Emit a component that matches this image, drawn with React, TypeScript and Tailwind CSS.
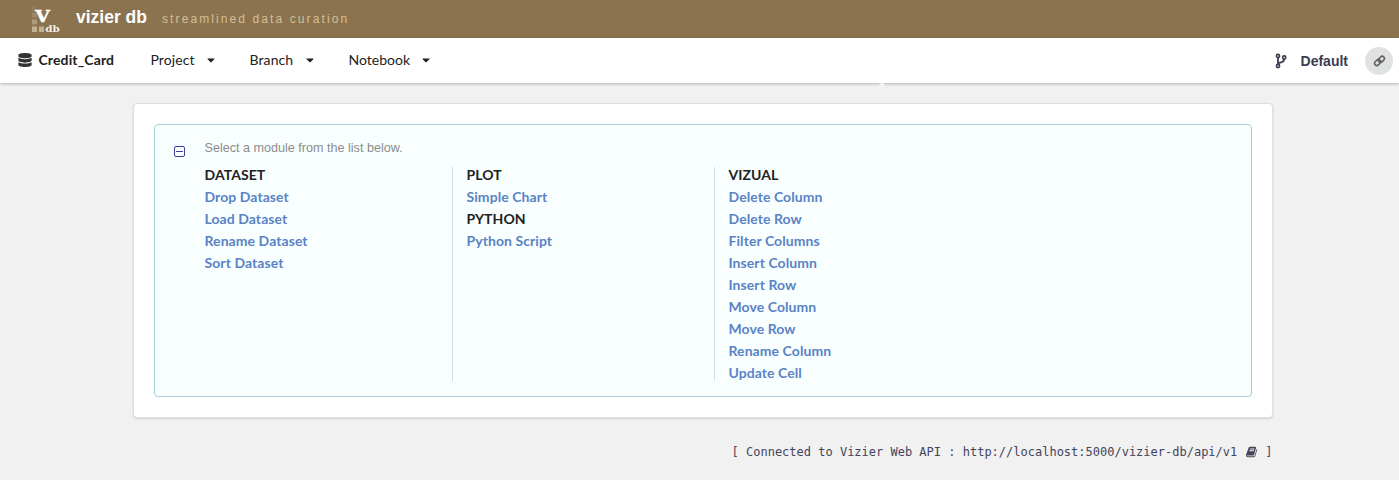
import type { ReactNode } from "react";
import { FaDatabase, FaCaretDown } from "react-icons/fa";

type Entry = { label: string; heading?: boolean };

const columns: Entry[][] = [
  [
    { label: "DATASET", heading: true },
    { label: "Drop Dataset" },
    { label: "Load Dataset" },
    { label: "Rename Dataset" },
    { label: "Sort Dataset" },
  ],
  [
    { label: "PLOT", heading: true },
    { label: "Simple Chart" },
    { label: "PYTHON", heading: true },
    { label: "Python Script" },
  ],
  [
    { label: "VIZUAL", heading: true },
    { label: "Delete Column" },
    { label: "Delete Row" },
    { label: "Filter Columns" },
    { label: "Insert Column" },
    { label: "Insert Row" },
    { label: "Move Column" },
    { label: "Move Row" },
    { label: "Rename Column" },
    { label: "Update Cell" },
  ],
];

function Logo() {
  return (
    <svg width="30" height="30" viewBox="0 0 30 30" className="mt-1 ml-[31px] shrink-0">
      <g fill="#e8d9bf">
        <rect x="1" y="2" width="5" height="5" opacity="0.08" />
        <rect x="1" y="8.500" width="5" height="5" opacity="0.2" />
        <rect x="1" y="15.500" width="5" height="5" opacity="0.4" />
        <rect x="1" y="22.500" width="5" height="5.500" opacity="0.6" />
        <rect x="8" y="22.500" width="5" height="5.500" opacity="0.6" />
      </g>
      <text x="4.300" y="18" fontFamily="'DejaVu Serif', serif" fontWeight="700" fontSize="17.500" textLength="14.500" lengthAdjust="spacingAndGlyphs" fill="#fff" stroke="#fff" strokeWidth="0.600">V</text>
      <text x="14.300" y="27.500" fontFamily="'DejaVu Serif', serif" fontWeight="700" fontSize="9.500" textLength="14.500" lengthAdjust="spacingAndGlyphs" fill="#f5eee2">db</text>
    </svg>
  );
}

function BranchIcon() {
  return (
    <svg width="12" height="16" viewBox="0 0 12 16" fill="none" stroke="currentColor" strokeWidth="1.600">
      <circle cx="3" cy="3" r="1.600" />
      <circle cx="3" cy="13" r="1.600" />
      <circle cx="9.200" cy="4.500" r="1.600" />
      <path d="M3 4.600v6.800M9.200 6.100c0 2.800-1.800 3-3.200 3.300-1.500.300-3 .600-3 2" strokeWidth="1.800" />
    </svg>
  );
}

function LinkIcon() {
  return (
    <svg width="13" height="13" viewBox="0 0 13 13" fill="none" stroke="currentColor" strokeWidth="1.600">
      <rect x="-3.300" y="-2.200" width="6.600" height="4.400" rx="2.200" transform="translate(8.400 5.300) rotate(-45)" />
      <rect x="-3.300" y="-2.200" width="6.600" height="4.400" rx="2.200" transform="translate(4.600 8.500) rotate(-45)" />
    </svg>
  );
}

function CollapseIcon() {
  return (
    <svg width="11" height="11" viewBox="0 0 11 11" fill="none" stroke="currentColor" className="mt-[21px] ml-[19px] shrink-0 text-[#453a9b]">
      <rect x="0.500" y="0.500" width="10" height="10" rx="1.500" />
      <path d="M2 5.500h7" />
    </svg>
  );
}

function BookIcon() {
  return (
    <svg width="12" height="12" viewBox="0 0 1792 1792" fill="currentColor" className="mr-[7px] ml-[9px] shrink-0">
      <path d="M1639 478q40 57 18 129l-275 906q-19 64-76.5 107.5t-122.5 43.5h-923q-77 0-148.5-53.5t-99.5-131.5q-24-67-2-127 0-4 3-27t4-37q1-8-3-21.5t-3-19.5q2-11 8-21t16.5-23.5 16.5-23.5q23-38 45-91.5t30-91.5q3-10 .5-30t-.5-28q3-11 17-28t17-23q21-36 42-92t25-90q1-9-2.5-32t.5-28q4-13 22-30.5t22-22.5q19-26 42.5-84.5t27.5-96.5q1-8-3-25.5t-2-26.5q2-8 9-18t18-23 17-21q8-12 16.5-30.5t15-35 16-36 19.5-32 26.5-23.5 36-11.5 47.5 5.5l-1 3q38-9 51-9h761q74 0 114 56t18 130l-274 906q-36 119-71.5 153.5t-128.5 34.5h-869q-27 0-38 15-11 16-1 43 24 70 144 70h923q29 0 56-15.5t35-41.5l300-987q7-22 5-57 38 15 59 43zm-1064 2q-4 13 2 22.5t20 9.5h608q13 0 25.5-9.5t16.5-22.5l21-64q4-13-2-22.5t-20-9.500h-608q-13 0-25.5 9.5t-16.5 22.5zm-83 256q-4 13 2 22.5t20 9.5h608q13 0 25.5-9.5t16.5-22.5l21-64q4-13-2-22.5t-20-9.500h-608q-13 0-25.5 9.5t-16.5 22.5z" />
    </svg>
  );
}

function MenuItem({ children, className }: { children: ReactNode; className: string }) {
  return (
    <div className={`flex items-center justify-between pb-0.5 ${className}`}>
      <span>{children}</span>
      <FaCaretDown size={12} />
    </div>
  );
}

export default function App() {
  return (
    <div className="flex h-[480px] w-[1399px] flex-col overflow-hidden bg-[#f1f1f1] font-['Lato',sans-serif] text-[14px] leading-5 text-[#212121]">
      <header className="flex h-[38px] shrink-0 bg-[#8b734f] font-['Liberation_Sans',sans-serif]">
        <Logo />
        <h1 className="ml-[15px] pt-[5px] text-[17.5px] leading-6 font-bold text-white">vizier db</h1>
        <p className="ml-[15px] pt-[9px] text-[12px] leading-5 tracking-[2.1px] text-[#d4bf94]">streamlined data curation</p>
      </header>
      <nav className="relative flex h-[45px] shrink-0 items-center bg-white shadow-[0_1px_3px_rgba(0,0,0,0.25)]">
        <FaDatabase size={14} className="mb-0.5 ml-[18px] text-[#333] [transform:scaleX(1.08)]" />
        <span className="ml-[6.500px] w-[112px] pb-0.5 font-bold tracking-[0.12px]">Credit_Card</span>
        <MenuItem className="w-[66px] tracking-[0.1px]">Project</MenuItem>
        <MenuItem className="ml-[33px] w-[66px] tracking-[0.1px]">Branch</MenuItem>
        <MenuItem className="ml-[33px] w-[83px]">Notebook</MenuItem>
        <div className="ml-auto flex items-center font-['Liberation_Sans',sans-serif] font-bold text-[#3c3c50]">
          <BranchIcon />
          <span className="ml-[13.500px]">Default</span>
          <span className="mr-1.5 ml-[17px] flex size-7 items-center justify-center rounded-full bg-[#e0e1e2] text-[#606162]">
            <LinkIcon />
          </span>
        </div>
        <span className="absolute top-[45px] left-[879px] h-1 w-1.5 rounded-t-full bg-[#f3f3f3]" />
      </nav>
      <main className="mt-5 ml-[133px] h-[315px] w-[1140px] shrink-0 rounded border border-[#dededf] bg-white p-5 shadow-[0_1px_2px_rgba(34,36,38,0.15)]">
        <section className="flex h-[273px] rounded border border-[#a9cfdc] bg-[#f9ffff]">
          <CollapseIcon />
          <div className="ml-[19.500px] flex-1 pt-3">
            <p className="font-['Liberation_Sans',sans-serif] text-[12.6px] leading-[22px] text-[#8c8c8c]">Select a module from the list below.</p>
            <div className="mt-2 grid grid-cols-[247px_262px_262px] grid-rows-[214px]">
              {columns.map((entries, index) => (
                <ul key={index} className={index === 0 ? "font-bold tracking-[0.07px]" : "border-l border-[#d4dcdc] pl-[14px] font-bold tracking-[0.07px]"}>
                  {entries.map((entry) => (
                    <li key={entry.label} className={entry.heading ? "h-[22px] leading-4" : "h-[22px] leading-4 text-[#5983c5]"}>{entry.label}</li>
                  ))}
                </ul>
              ))}
            </div>
          </div>
        </section>
      </main>
      <footer className="mt-6 flex w-[1272.500px] items-center justify-end font-['DejaVu_Sans_Mono',monospace] text-[12px] leading-5 text-[#44445a]">
        <span>[ Connected to Vizier Web API : http://localhost:5000/vizier-db/api/v1</span>
        <BookIcon />
        <span>]</span>
      </footer>
    </div>
  );
}
